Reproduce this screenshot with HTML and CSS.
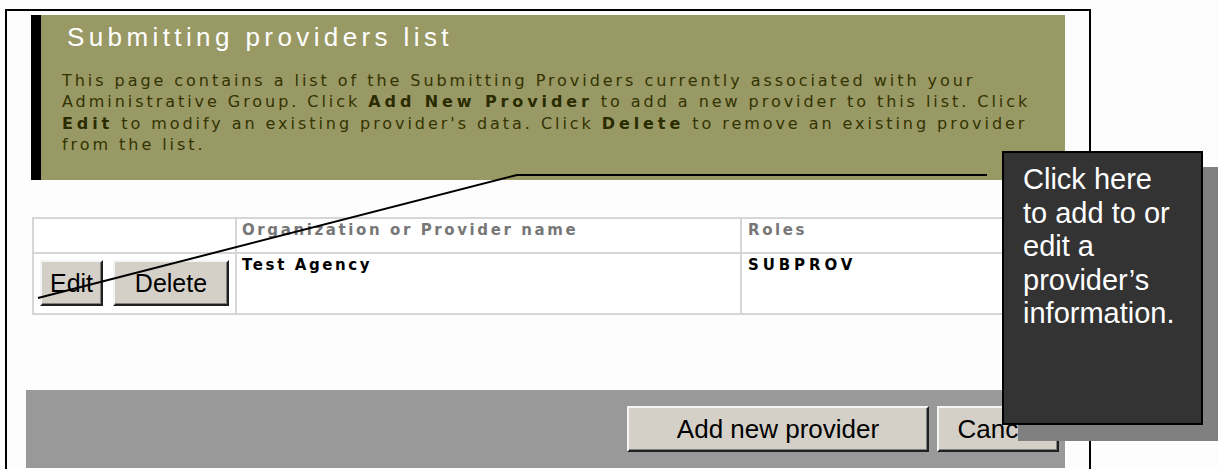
FILE: index.html
```html
<!DOCTYPE html>
<html lang="en">
<head>
<meta charset="utf-8">
<title>Submitting providers list</title>
<link rel="stylesheet" href="styles.css">
</head>
<body>
<div class="frame">
  <section class="intro">
    <h1 class="intro-title">Submitting providers list</h1>
    <p class="intro-text">This page contains a list of the Submitting Providers currently associated with your<br>
      Administrative Group. Click <b>Add New Provider</b> to add a new provider to this list. Click<br>
      <b>Edit</b> to modify an existing provider's data. Click <b>Delete</b> to remove an existing provider<br>
      from the list.</p>
  </section>

  <table class="providers">
    <thead>
      <tr>
        <th class="col-actions"></th>
        <th class="col-name">Organization or Provider name</th>
        <th class="col-roles">Roles</th>
      </tr>
    </thead>
    <tbody>
      <tr>
        <td class="col-actions">
          <div class="row-actions">
            <button class="btn btn-edit" type="button">Edit</button>
            <button class="btn btn-delete" type="button">Delete</button>
          </div>
        </td>
        <td class="cell-strong">Test Agency</td>
        <td class="cell-strong cell-code">SUBPROV</td>
      </tr>
    </tbody>
  </table>

  <div class="footer">
    <button class="btn btn-add" type="button">Add new provider</button>
    <button class="btn btn-cancel" type="button">Cancel</button>
  </div>
</div>

<svg class="pointer" width="1218" height="469" viewBox="0 0 1218 469" aria-hidden="true">
  <polyline points="38,298 517,175 987,175" fill="none" stroke="#000" stroke-width="2"/>
</svg>

<aside class="callout">Click here to add to or edit a provider’s information.</aside>
</body>
</html>
```

FILE: styles.css
```css
html, body {
  margin: 0;
  padding: 0;
}

body {
  width: 1218px;
  height: 469px;
  overflow: hidden;
  position: relative;
  background: #fdfdfd;
  font-family: "Liberation Sans", Arial, sans-serif;
}

/* outlined page frame, open at the bottom */
.frame {
  box-sizing: border-box;
  width: 1086px;
  height: 460px;
  margin: 9px 0 0 5px;
  padding: 4px 24px 0 19px;
  border: 2px solid #000;
  border-bottom: 0;
}

/* olive heading panel */
.intro {
  margin-left: 5px;
  padding: 9px 4px 25px 21px;
  background: #999966;
  border-left: 10px solid #000;
}

.intro-title {
  margin: 0 0 20px;
  padding-left: 5px;
  font-family: "Liberation Sans", Arial, sans-serif;
  font-weight: normal;
  font-size: 26px;
  line-height: 26px;
  letter-spacing: 4.4px;
  color: #fff;
}

.intro-text {
  margin: 0;
  font-family: "DejaVu Sans", Verdana, sans-serif;
  font-size: 16px;
  letter-spacing: 2.95px;
  line-height: 21.3px;
  color: #333300;
  white-space: nowrap;
}

.intro-text b {
  color: #2b2b00;
  letter-spacing: 3.9px;
}

/* provider table */
.providers {
  width: 1033px;
  margin: 37px 0 0 6px;
  border-collapse: separate;
  border-spacing: 0;
  border-top: 2px solid #d6d6d6;
  border-left: 2px solid #d6d6d6;
  background: #fff;
}

.providers th,
.providers td {
  border-right: 2px solid #d6d6d6;
  border-bottom: 2px solid #d6d6d6;
  vertical-align: top;
  text-align: left;
  font-family: "DejaVu Sans", Verdana, sans-serif;
  font-weight: bold;
  font-size: 15px;
  letter-spacing: 2.6px;
  line-height: 17px;
}

.providers th {
  height: 29px;
  padding: 3px 5px 1px;
  color: #777777;
}

.providers td {
  padding: 3px 5px;
  color: #000;
}

.providers td.cell-code {
  letter-spacing: 3.9px;
}

.providers .col-actions {
  width: 191px;
}

.providers .col-name {
  width: 493px;
}

.providers .col-roles,
.providers td.cell-code {
  padding-left: 6px;
}

.providers td.col-actions {
  padding: 6px 0 7px 6px;
}

.row-actions {
  display: flex;
  gap: 10px;
}

/* classic raised buttons */
.btn {
  box-sizing: border-box;
  height: 46px;
  padding: 0;
  font-family: "Liberation Sans", Arial, sans-serif;
  font-size: 25px;
  color: #000;
  background: #d4d0c8;
  border: 2px solid;
  border-color: #f4f4f4 #202020 #202020 #f4f4f4;
  box-shadow: inset -1px -1px 0 #808080;
  border-radius: 0;
}

.btn-edit {
  width: 63px;
}

.btn-delete {
  width: 116px;
}

.btn-add {
  width: 302px;
  font-size: 26px;
}

.btn-cancel {
  width: 122px;
  font-size: 26px;
}

/* grey action bar */
.footer {
  display: flex;
  justify-content: flex-end;
  align-items: flex-start;
  gap: 8px;
  height: 62px;
  margin-top: 75px;
  padding: 16px 6px 0 0;
  background: #999999;
}

/* leader line from the note to the Edit button */
.pointer {
  position: absolute;
  top: 0;
  left: 0;
  pointer-events: none;
}

/* floating help note */
.callout {
  position: absolute;
  left: 1002px;
  top: 151px;
  box-sizing: border-box;
  width: 201px;
  height: 274px;
  padding: 10px 23px 0 19px;
  background: #333333;
  border: 2px solid #000;
  box-shadow: 16px 16px 0 #808080;
  color: #fff;
  font-family: "Liberation Sans", Arial, sans-serif;
  font-size: 29px;
  line-height: 33.5px;
}
```
